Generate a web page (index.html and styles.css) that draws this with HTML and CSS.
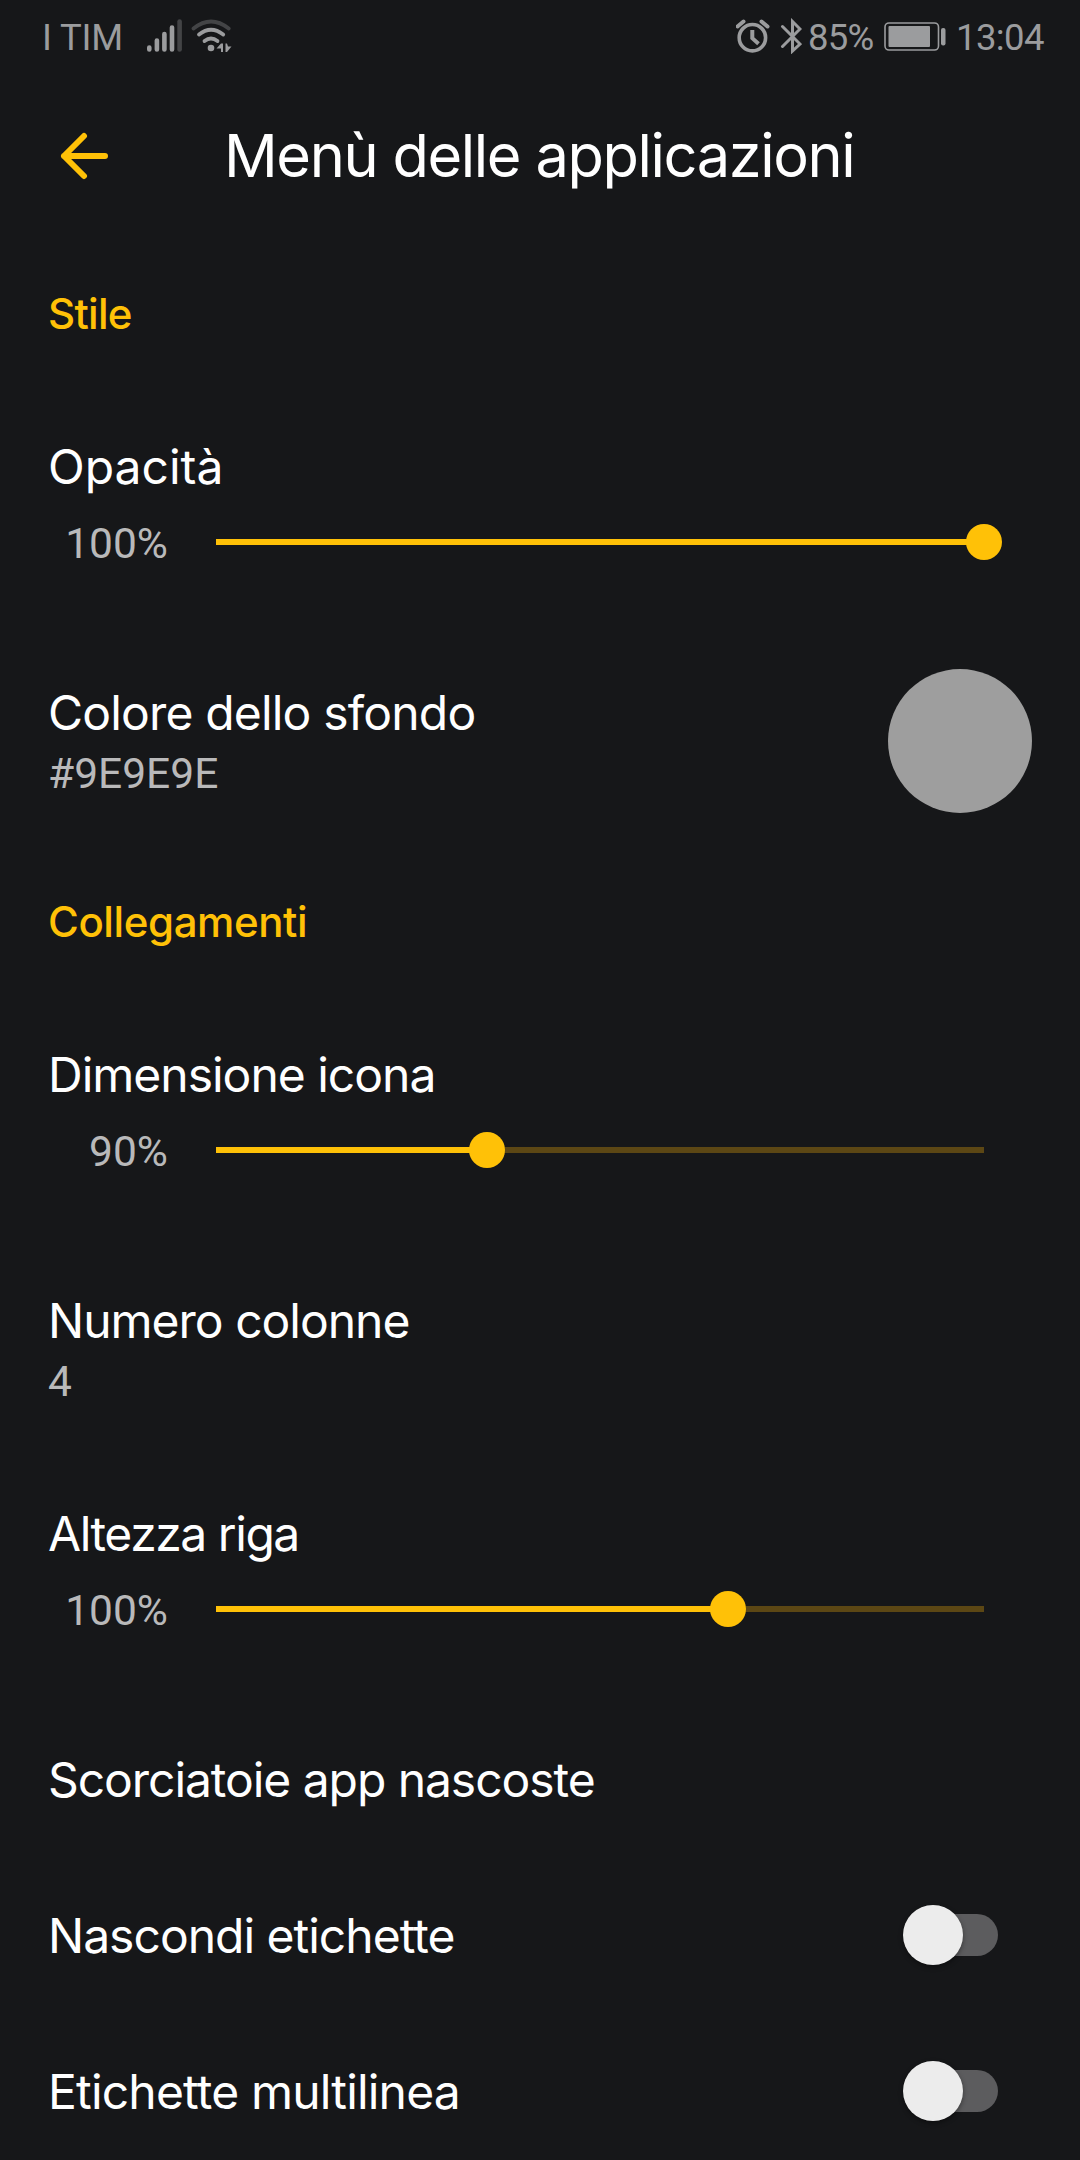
FILE: index.html
```
<!DOCTYPE html>
<html lang="it">
<head>
<meta charset="utf-8">
<title>Menù delle applicazioni</title>
<link rel="stylesheet" href="styles.css">
</head>
<body>
<div class="status">
  <span class="carrier">I TIM</span>
  <svg class="signal" width="37" height="34" viewBox="146 18 37 34" stroke="#9b9c9e" stroke-width="4.6" stroke-linecap="round">
    <path d="M149.3 47.5v2M156.9 40.5v9M164.4 34v15.5M172 27.5v22"/><path d="M179.6 21.5v28" stroke="#434446"/>
  </svg>
  <svg class="wifi" width="44" height="36" viewBox="190 18 44 36" fill="none" stroke="#9b9c9e" stroke-width="3.8" stroke-linecap="round">
    <path d="M193.500 28.500Q211 14.500 228.700 28.500" stroke="#434446"/>
    <path d="M199 34.500Q211 25 223.200 34.500M204.500 41Q211 36 217.500 41"/>
    <circle cx="211" cy="48" r="3.300" fill="#9b9c9e" stroke="none"/>
    <path d="M216.500 48.500L221 43.500h2v8.500h-2v-3.500zM225.500 43.500h1.500l1 3h3.500l-4.500 5.500h-1.500z" fill="#9b9c9e" stroke="none"/>
  </svg>
  <svg class="alarm" width="34" height="36" viewBox="736 18 34 36" fill="none" stroke="#9b9c9e" stroke-width="3.6">
    <circle cx="752.400" cy="37.700" r="13.200"/>
    <path d="M752.300 30v8.200l6.200 5.500" stroke-width="4"/>
    <path d="M737.500 26.500l6-5M767.500 26.500l-6-5" stroke-width="4" stroke-linecap="round"/>
  </svg>
  <svg class="bluetooth" width="22" height="36" viewBox="780 18 22 36" fill="none" stroke="#9b9c9e" stroke-width="3" stroke-linecap="round">
    <path d="M782.500 26.500L800 44L792.500 51V21.500L800 29L782.500 46.500"/>
  </svg>
  <span class="percent">85%</span>
  <svg class="battery" width="62" height="30" viewBox="883 22 62 30">
    <rect x="884" y="23" width="53.500" height="27" rx="4" fill="none" stroke="#9b9c9e" stroke-width="1.600"/>
    <rect x="887.500" y="26" width="41.500" height="21" rx="1" fill="#9b9c9e"/>
    <rect x="940" y="28" width="4.500" height="17.500" rx="2" fill="#9b9c9e"/>
  </svg>
  <span class="clock">13:04</span>
</div>

<header class="appbar">
  <svg class="back" width="50" height="50" viewBox="0 0 50 50" fill="none" stroke="#ffc107" stroke-width="6" stroke-linecap="round" stroke-linejoin="round">
    <path d="M45 25H4M24 5L4 25L24 45"/>
  </svg>
  <h1 class="heading">Menù delle applicazioni</h1>
</header>

<main class="list">
  <h2 class="section short">Stile</h2>
  <div class="row slider-row">
    <div class="title opacity">Opacità</div>
    <div class="control"><span class="value">100%</span><div class="slider"><div class="fill" style="width:100%"><i class="knob"></i></div></div></div>
  </div>
  <div class="row color-row">
    <div>
      <div class="title loose">Colore dello sfondo</div>
      <div class="sub">#9E9E9E</div>
    </div>
    <div class="swatch"></div>
  </div>

  <h2 class="section">Collegamenti</h2>
  <div class="row slider-row">
    <div class="title">Dimensione icona</div>
    <div class="control"><span class="value">90%</span><div class="slider"><div class="fill" style="width:35.3%"><i class="knob"></i></div></div></div>
  </div>
  <div class="row text-row">
    <div class="title">Numero colonne</div>
    <div class="sub">4</div>
  </div>
  <div class="row slider-row">
    <div class="title tight">Altezza riga</div>
    <div class="control"><span class="value">100%</span><div class="slider"><div class="fill" style="width:66.7%"><i class="knob"></i></div></div></div>
  </div>
  <div class="row link-row">
    <div class="title long">Scorciatoie app nascoste</div>
  </div>
  <div class="row switch-row">
    <div class="title">Nascondi etichette</div>
    <div class="switch"><i class="thumb"></i></div>
  </div>
  <div class="row switch-row">
    <div class="title loose">Etichette multilinea</div>
    <div class="switch"><i class="thumb"></i></div>
  </div>
</main>
</body>
</html>
```
FILE: styles.css
```
* { box-sizing: border-box; }
body {
  margin: 0;
  width: 1080px;
  height: 2160px;
  overflow: hidden;
  background: #161719;
  color: #fff;
  font-family: Inter, "Liberation Sans", sans-serif;
}
svg { display: block; flex: none; }

.status {
  display: flex;
  height: 72px;
  padding-left: 42px;
  font: 36.5px/42px Roboto, sans-serif;
  color: #9b9c9e;
  white-space: nowrap;
}
.status span { flex: none; margin-top: 17px; }
.carrier { width: 104px; letter-spacing: -0.17px; }
.signal { margin-top: 18px; }
.wifi { margin: 18px 0 0 7px; }
.alarm { margin: 18px 0 0 502px; }
.bluetooth { margin: 18px 0 0 10px; }
.percent { margin-left: 6px; width: 76px; letter-spacing: -0.8px; }
.battery { margin-top: 22px; }
.clock { margin-left: 10px; letter-spacing: -0.6px; }

.appbar {
  display: flex;
  align-items: center;
  height: 168px;
  padding-left: 60px;
}
.heading {
  margin: -2px 0 0 114px;
  font-size: 59.5px;
  font-weight: 400;
  line-height: 72px;
  letter-spacing: -1.4px;
  white-space: nowrap;
}

.list { padding-top: 16px; }
.section {
  display: flex;
  align-items: center;
  height: 115px;
  margin: 0;
  padding-left: 48px;
  color: #ffc107;
  font-size: 42px;
  font-weight: 500;
  letter-spacing: -0.4px;
}
.short { letter-spacing: -0.7px; }
.row { padding-left: 48px; }
.title {
  font-size: 48px;
  line-height: 58px;
  letter-spacing: -1px;
  white-space: nowrap;
}
.opacity { letter-spacing: 0; }
.loose { letter-spacing: -0.82px; }
.tight { letter-spacing: -1.45px; }
.long { letter-spacing: -1.06px; }

.slider-row { height: 247px; padding-top: 67px; }
.control { display: flex; gap: 48px; margin-top: 23px; }
.value {
  width: 120px;
  text-align: right;
  font: 42.5px/50px Roboto, sans-serif;
  color: #b9b9ba;
}
.slider {
  width: 768px;
  height: 6px;
  margin-top: 20px;
  background: #5c4714;
}
.fill {
  display: flex;
  justify-content: flex-end;
  align-items: center;
  height: 6px;
  background: #ffc107;
}
.knob {
  flex: none;
  width: 36px;
  height: 36px;
  margin-right: -18px;
  border-radius: 50%;
  background: #ffc107;
}

.color-row {
  display: flex;
  justify-content: space-between;
  height: 246px;
  padding: 66px 48px 0;
}
.sub {
  margin-top: 7px;
  font: 42.5px/50px Roboto, sans-serif;
  color: #b9b9ba;
}
.swatch {
  width: 144px;
  height: 144px;
  margin-top: -15px;
  border-radius: 50%;
  background: #9e9e9e;
}
.text-row { height: 212px; padding-top: 66px; }
.link-row { height: 172px; padding-top: 66px; }

.switch-row {
  display: flex;
  align-items: center;
  justify-content: space-between;
  height: 156px;
  padding-right: 82px;
}
.switch-row .title { padding-top: 2px; }
.switch {
  display: flex;
  align-items: center;
  width: 93px;
  height: 42px;
  border-radius: 21px;
  background: #5c5c5e;
}
.thumb {
  flex: none;
  width: 60px;
  height: 60px;
  margin-left: -2.5px;
  border-radius: 50%;
  background: #ececec;
  box-shadow: 0 2px 5px rgba(0, 0, 0, 0.4);
}
```
